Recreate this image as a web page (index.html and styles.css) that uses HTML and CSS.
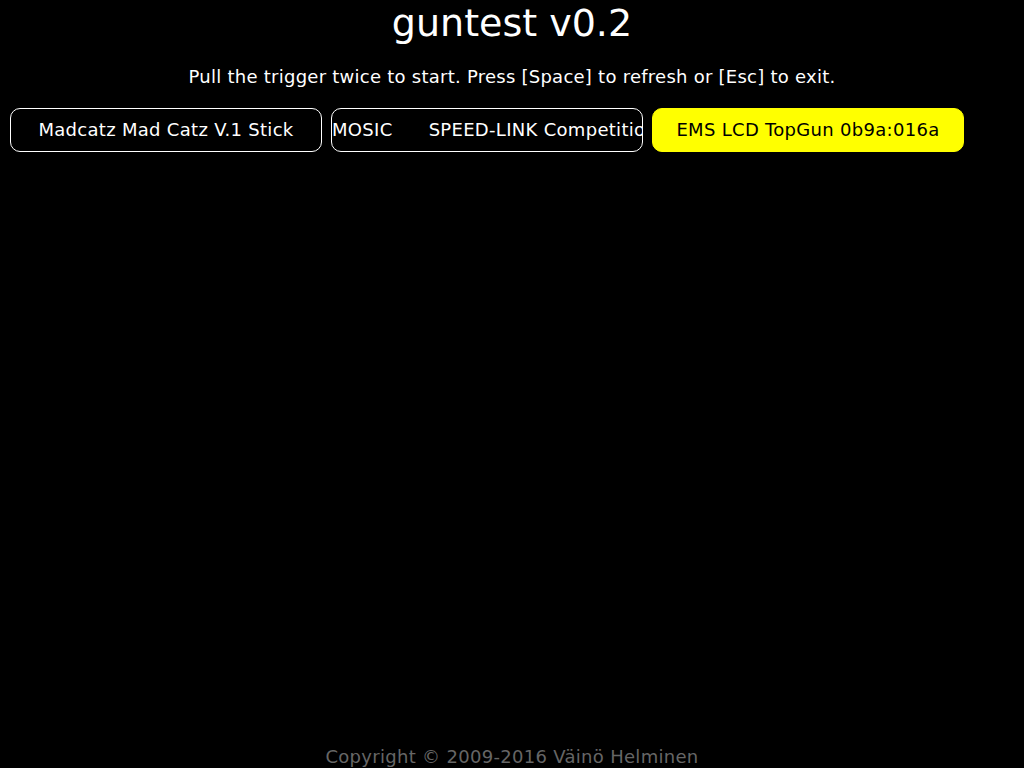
FILE: index.html
```html
<!DOCTYPE html>
<html>
<head>
<meta charset="utf-8">
<title>guntest</title>
<link rel="stylesheet" href="styles.css">
</head>
<body>
<div class="page">
  <h1 class="title">guntest v0.2</h1>
  <p class="hint">Pull the trigger twice to start. Press [Space] to refresh or [Esc] to exit.</p>
  <div class="devices">
    <div class="device">Madcatz Mad Catz V.1 Stick</div>
    <div class="device">MOSIC      SPEED-LINK Competition Pro</div>
    <div class="device active">EMS LCD TopGun 0b9a:016a</div>
  </div>
  <div class="spacer"></div>
  <p class="copyright">Copyright © 2009-2016 Väinö Helminen</p>
</div>
</body>
</html>
```
FILE: styles.css
```css
html, body {
  margin: 0;
  padding: 0;
  background: #000;
  height: 100%;
}
.page {
  height: 768px;
  display: flex;
  flex-direction: column;
  font-family: "DejaVu Sans", sans-serif;
  color: #fff;
  overflow: hidden;
}
.title {
  margin: 0;
  height: 46px;
  line-height: 46px;
  font-size: 38px;
  font-weight: normal;
  text-align: center;
}
.hint {
  margin: 0;
  margin-top: 17px;
  height: 28px;
  line-height: 28px;
  font-size: 18px;
  letter-spacing: 0.25px;
  text-align: center;
}
.devices {
  display: flex;
  gap: 9px;
  padding: 17px 10px 0;
}
.device {
  box-sizing: border-box;
  width: 312px;
  height: 44px;
  line-height: 42px;
  border: 1px solid #fff;
  border-radius: 10px;
  font-size: 18px;
  letter-spacing: 0.3px;
  text-align: center;
  white-space: pre;
  overflow: hidden;
}
.device.active {
  background: #ff0;
  color: #000;
  border-color: #ff0;
}
.spacer {
  flex: 1;
}
.copyright {
  margin: 0;
  height: 22px;
  line-height: 22px;
  font-size: 18px;
  letter-spacing: 0.3px;
  color: #666;
  text-align: center;
}
```
